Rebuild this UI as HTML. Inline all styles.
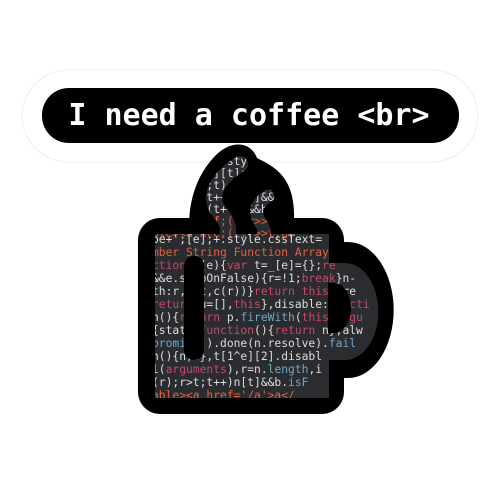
<!DOCTYPE html>
<html><head><style>
html,body{margin:0;padding:0;background:#fff;width:500px;height:500px;overflow:hidden}
</style></head><body>
<svg width="500" height="500" viewBox="0 0 500 500" xmlns="http://www.w3.org/2000/svg">
<defs>
<mask id="mk">
<rect x="0" y="0" width="500" height="500" fill="#000"/>
<rect x="155" y="234" width="174" height="164" fill="#fff"/>
<path d="M320 263 L345 263 A33 48 0 0 1 345 360 L320 360 Z" fill="#fff"/>
<path d="M240 164 C218 178,208 195,218 210 C228 222,230 228,226 240" fill="none" stroke="#fff" stroke-width="16" stroke-linecap="round"/>
<path d="M268 196 C256 204,254 212,260 222 C266 230,264 236,262 242" fill="none" stroke="#fff" stroke-width="13" stroke-linecap="round"/>
</mask>
</defs>
<rect x="22" y="70" width="456" height="92" rx="46" fill="#fff" stroke="#eee" stroke-width="1"/>
<rect x="42" y="88" width="417" height="55" rx="27" fill="#000"/>
<text x="249" y="125" text-anchor="middle" font-family="DejaVu Sans Mono, Liberation Mono, monospace" font-weight="bold" font-size="30" fill="#fff">I need a coffee &lt;br&gt;</text>
<!-- steam blob -->
<path d="M190 240 C186 205,196 175,216 155 C230 141,250 140,257 158 C266 163,286 170,292 196 C296 215,293 230,293 240 Z" fill="#000"/>
<!-- handle -->
<path d="M320 242 L348 242 A45 67 0 0 1 348 378 L320 378 Z" fill="#000"/>
<rect x="138" y="218" width="206" height="196" rx="22" fill="#000"/>
<g mask="url(#mk)">
<rect x="150" y="140" width="240" height="260" fill="#2a2c30"/>
<g font-family="DejaVu Sans Mono, Liberation Mono, monospace" font-size="11.3">
<text x="152" y="165" fill="#ddd">pe+';[e];+.style(n[e][ty.p</text>
<text x="152" y="177" fill="#ddd">+t,a=(n)e][t]r.n=e[t](r)</text>
<text x="152" y="189" fill="#ddd">s=t,r=[e;t),r=n.e,u=cs(s)</text>
<text x="152" y="201" fill="#ddd">(r);r&gt;t;t++)n[t]&amp;&amp;b.is(r)</text>
<text x="152" y="213" fill="#ddd">f.r=i;n;(t++),&amp;&amp;b(t.++)</text>
<text x="152" y="225" fill="#e8603c">lanl&gt;ahref;(r;r&gt;&gt;t;hr</text>
<text x="152" y="237" fill="#e8603c">ble&gt;&lt;a hre;(r;r&gt;&gt;t;hr</text>
<text x="152" y="243" fill="#ddd">pe+';[e];+.style.cssText=</text>
<text x="152" y="256" fill="#e8603c">mber String Function Array</text>
<text x="152" y="269"><tspan fill="#c7476d">ction</tspan><tspan fill="#ddd"> F(e){</tspan><tspan fill="#c7476d">var</tspan><tspan fill="#ddd"> t=_[e]={};</tspan><tspan fill="#c7476d">re</tspan></text>
<text x="152" y="282" fill="#ddd">&amp;&amp;e.stopOnFalse){r=!1;<tspan fill="#c7476d">break</tspan>}n-</text>
<text x="152" y="295" fill="#ddd">th:r,s=t,c(r))}<tspan fill="#c7476d">return this</tspan>},re</text>
<text x="152" y="308"><tspan fill="#c7476d">return</tspan><tspan fill="#ddd"> u=[],</tspan><tspan fill="#c7476d">this</tspan><tspan fill="#ddd">},disable:</tspan><tspan fill="#c7476d">functi</tspan></text>
<text x="152" y="321" fill="#ddd">n(){<tspan fill="#c7476d">return</tspan> p.<tspan fill="#6fa8c8">fireWith</tspan>(<tspan fill="#c7476d">this,argu</tspan></text>
<text x="152" y="334" fill="#ddd">{state:<tspan fill="#c7476d">function</tspan>(){<tspan fill="#c7476d">return</tspan> n},alw</text>
<text x="152" y="347" fill="#ddd"><tspan fill="#6fa8c8">promise</tspan>().done(n.resolve).<tspan fill="#6fa8c8">fail</tspan></text>
<text x="152" y="360" fill="#ddd">n(){n,s},t[1^e][2].disabl</text>
<text x="152" y="373" fill="#ddd">l(<tspan fill="#c7476d">arguments</tspan>),r=n.<tspan fill="#6fa8c8">length</tspan>,i</text>
<text x="152" y="386" fill="#ddd">(r);r&gt;t;t++)n[t]&amp;&amp;b.<tspan fill="#6fa8c8">isF</tspan></text>
<text x="152" y="399" fill="#e8603c">able&gt;&lt;a href='/a'&gt;a&lt;/</text>
</g>
</g>
<path d="M328 283 L334 283 A17 25 0 0 1 334 333 L328 333 Z" fill="#000"/>
<rect x="184" y="256" width="20" height="104" rx="10" fill="#000"/>
</svg>
</body></html>
